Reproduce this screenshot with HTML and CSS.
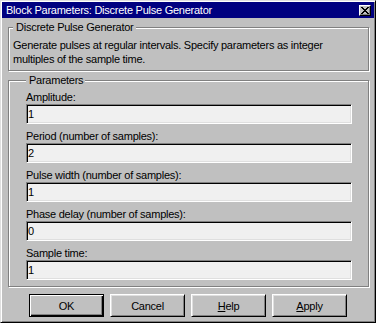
FILE: index.html
```html
<!DOCTYPE html>
<html>
<head>
  <meta charset="UTF-8">
  <meta name="viewport" content="width=device-width, initial-scale=1.0">
  <title>Block Parameters: Discrete Pulse Generator</title>
  <link rel="stylesheet" href="styles.css">
</head>
<body>
  <div class="window">
    <div class="titlebar">
      <span class="title">Block Parameters: Discrete Pulse Generator</span>
      <span class="close-btn">
        <svg width="8" height="7" viewBox="0 0 8 7">
          <path d="M0 0h2v1h-2zM6 0h2v1h-2zM1 1h2v1h-2zM5 1h2v1h-2zM2 2h4v1h-4zM3 3h2v1h-2zM2 4h4v1h-4zM1 5h2v1h-2zM5 5h2v1h-2zM0 6h2v1h-2zM6 6h2v1h-2z" fill="#000"/>
        </svg>
      </span>
    </div>

    <fieldset class="group group-desc">
      <legend>Discrete Pulse Generator</legend>
      <p>Generate pulses at regular intervals. Specify parameters as integer<br>multiples of the sample time.</p>
    </fieldset>

    <fieldset class="group group-params">
      <legend>Parameters</legend>
      <div class="field">
        <label>Amplitude:</label>
        <input class="edit" type="text" value="1">
      </div>
      <div class="field">
        <label>Period (number of samples):</label>
        <input class="edit" type="text" value="2">
      </div>
      <div class="field">
        <label>Pulse width (number of samples):</label>
        <input class="edit" type="text" value="1">
      </div>
      <div class="field">
        <label>Phase delay (number of samples):</label>
        <input class="edit" type="text" value="0">
      </div>
      <div class="field">
        <label>Sample time:</label>
        <input class="edit" type="text" value="1">
      </div>
    </fieldset>

    <div class="buttons">
      <button class="btn btn-default">OK</button>
      <button class="btn">Cancel</button>
      <button class="btn"><u>H</u>elp</button>
      <button class="btn"><u>A</u>pply</button>
    </div>
  </div>
</body>
</html>
```

FILE: styles.css
```css
/* Win98 style dialog */
body {
  margin: 0;
  background-color: #c0c0c0;
  font-family: "Liberation Sans", Arial, sans-serif;
  font-size: 11px;
  letter-spacing: -0.25px;
  color: #000;
}
.window {
  box-sizing: border-box;
  width: 376px;
  height: 323px;
  padding: 1px;
  background-color: #c0c0c0;
  border: 1px solid;
  border-color: #dfdfdf #000 #000 #dfdfdf;
  box-shadow: inset 1px 1px #fff, inset -1px -1px #808080;
}
.titlebar {
  display: flex;
  align-items: center;
  justify-content: space-between;
  height: 16px;
  padding: 0 3px 0 4px;
  background-color: #000080;
  color: #fff;
}
.title {
  line-height: 16px;
}
.close-btn {
  box-sizing: border-box;
  display: flex;
  align-items: center;
  justify-content: center;
  width: 12px;
  height: 11px;
  background-color: #c0c0c0;
  border: 1px solid;
  border-color: #fff #000 #000 #fff;
  box-shadow: inset -1px -1px #808080;
}
.group {
  margin: 3px 5px 0 6px;
  border: 1px solid #808080;
  box-shadow: inset 1px 1px #fff, 1px 1px #fff;
  min-inline-size: 0;
}
.group legend {
  padding: 0 2px 0 3px;
  line-height: 13px;
  background-color: #c0c0c0;
}
.group-desc {
  padding: 4px 6px 4px 4px;
}
.group-desc p {
  margin: 0;
  line-height: 14px;
}
.group-params {
  padding: 4px 16px 6px 17px;
}
.field {
  display: flex;
  flex-direction: column;
  margin-bottom: 6px;
}
.field:last-child {
  margin-bottom: 0;
}
.field label {
  line-height: 13px;
}
.edit {
  box-sizing: border-box;
  width: 100%;
  height: 20px;
  margin: 0;
  padding: 0 1px;
  font: inherit;
  letter-spacing: inherit;
  color: #000;
  background-color: #f0f0f0;
  border: 1px solid;
  border-color: #808080 #fff #fff #808080;
  box-shadow: inset 1px 1px #000, inset -1px -1px #dfdfdf;
  outline: none;
}
.buttons {
  display: flex;
  justify-content: center;
  gap: 6px;
  margin-top: 7px;
}
.btn {
  box-sizing: border-box;
  width: 75px;
  height: 23px;
  padding: 0;
  font: inherit;
  letter-spacing: inherit;
  color: #000;
  background-color: #c0c0c0;
  border: 1px solid;
  border-color: #fff #000 #000 #fff;
  box-shadow: inset 1px 1px #dfdfdf, inset -1px -1px #808080;
}
.btn-default {
  border-color: #000;
  box-shadow: inset 1px 1px #fff, inset -1px -1px #000, inset -2px -2px #808080;
}
```
